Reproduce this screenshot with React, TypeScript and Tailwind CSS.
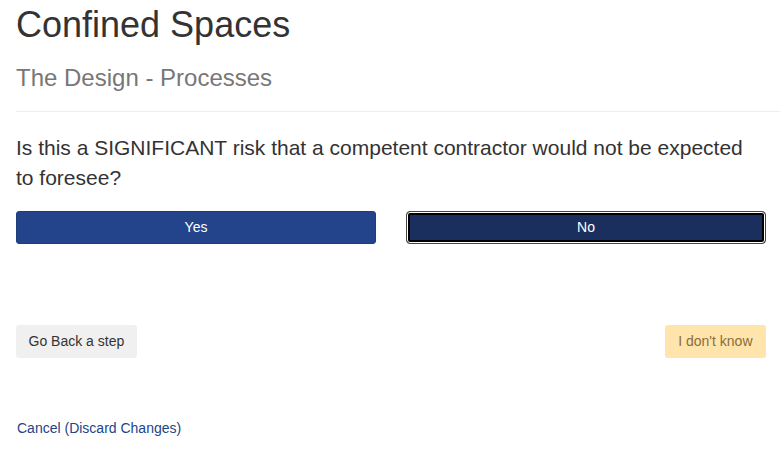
export default function App() {
  return (
    <div className="w-[780px] h-[449px] overflow-hidden bg-white pl-4 pr-[14px]" style={{ fontFamily: '"Liberation Sans", Arial, sans-serif' }}>
      <h1 className="mt-[5px] text-[36px] leading-[40px] text-[#333333] font-normal">Confined Spaces</h1>
      <h2 className="mt-[19px] text-[24px] leading-[28px] text-[#777777] font-normal">The Design - Processes</h2>
      <div className="mt-[19px] h-px bg-[#eeeeee] -mr-[14px]" />
      <p className="mt-[21px] text-[21px] leading-[30px] text-[#333333]">
        Is this a SIGNIFICANT risk that a competent contractor would not be expected to foresee?
      </p>
      <div className="mt-[18px] grid grid-cols-2 gap-[30px]">
        <button className="h-[33px] rounded-[3px] bg-[#23448a] text-white text-[14px] border border-[#1f3d7c]">Yes</button>
        <button className="h-[33px] rounded-[4px] bg-[#1b2f5f] text-white text-[14px] border border-[#444] shadow-[inset_0_0_0_1px_#ffffff,inset_0_0_0_3px_#000000]">No</button>
      </div>
      <div className="mt-[81px] flex justify-between">
        <button className="h-[33px] px-[12.5px] rounded-[3px] bg-[#f0f0f0] text-[#333333] text-[14px]">Go Back a step</button>
        <button className="h-[33px] px-[13.5px] rounded-[3px] bg-[#ffe4ac] text-[#8a6d3b] text-[14px]">I don't know</button>
      </div>
      <a href="#" className="block mt-[60px] text-[14px] leading-[20px] text-[#23448a] w-fit pl-px">Cancel (Discard Changes)</a>
    </div>
  );
}
